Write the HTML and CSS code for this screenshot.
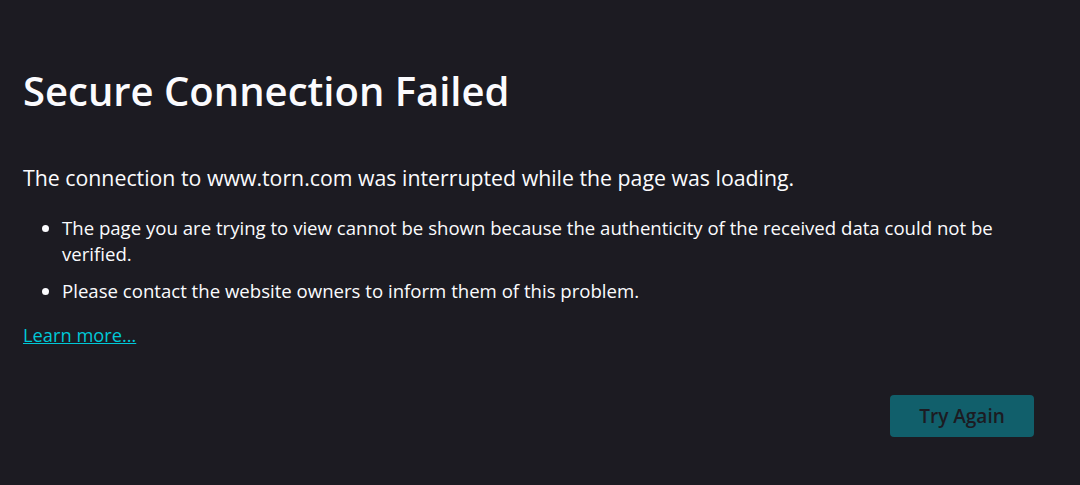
FILE: index.html
```html
<!DOCTYPE html>
<html lang="en">
<head>
  <meta charset="UTF-8">
  <meta name="viewport" content="width=device-width, initial-scale=1.0">
  <title>Secure Connection Failed</title>
  <link rel="stylesheet" href="styles.css">
</head>
<body>
  <div class="container">
    <h1 class="title">Secure Connection Failed</h1>
    <p class="intro">The connection to www.torn.com was interrupted while the page was loading.</p>
    <ul class="details">
      <li>The page you are trying to view cannot be shown because the authenticity of the received data could not be verified.</li>
      <li>Please contact the website owners to inform them of this problem.</li>
    </ul>
    <a class="learn-more" href="#">Learn more…</a>
    <div class="button-row">
      <button type="button" class="try-again" disabled>Try Again</button>
    </div>
  </div>
</body>
</html>
```
FILE: styles.css
```css
html, body {
  margin: 0;
  height: 100%;
}
body {
  background-color: #1c1b22;
  color: #fbfbfe;
  font-family: "Open Sans", "Noto Sans", sans-serif;
}
.container {
  padding: 64px 46px 0 23px;
}
.title {
  margin: 0;
  font-size: 40px;
  font-weight: 600;
  line-height: 54px;
}
.intro {
  margin: 46px 0 0;
  font-size: 21.3px;
  line-height: 28px;
}
.details {
  margin: 23px 0 0;
  padding-left: 39px;
  font-size: 18.6px;
  line-height: 26px;
}
.details li {
  margin-bottom: 11px;
}
.learn-more {
  display: inline-block;
  margin-top: 7px;
  color: #00c8d7;
  font-size: 18.3px;
  line-height: 26px;
}
.button-row {
  display: flex;
  justify-content: flex-end;
  margin-top: 47px;
}
.try-again {
  width: 144px;
  height: 42px;
  border: none;
  border-radius: 4px;
  background-color: #115f6b;
  color: #1c1b22;
  font-family: inherit;
  font-size: 19px;
  font-weight: 600;
}
```
